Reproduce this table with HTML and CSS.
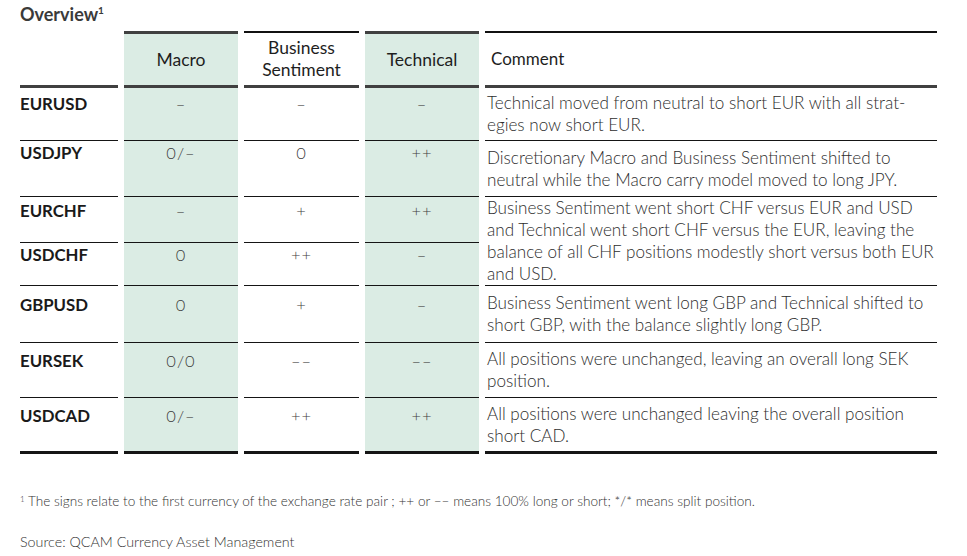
FILE: index.html
```html
<!DOCTYPE html>
<html lang="en">
<head>
<meta charset="utf-8">
<title>Overview</title>
<link rel="stylesheet" href="styles.css">
</head>
<body>
<div class="page">
  <h1 class="title">Overview<sup>1</sup></h1>
  <table class="overview">
    <colgroup>
      <col class="c-pair">
      <col class="c-macro">
      <col class="c-bs">
      <col class="c-tech">
      <col class="c-comment">
    </colgroup>
    <thead>
      <tr class="head">
        <th class="pair"></th>
        <th class="green">Macro</th>
        <th class="white">Business<br>Sentiment</th>
        <th class="green">Technical</th>
        <th class="white comment">Comment</th>
      </tr>
    </thead>
    <tbody>
      <tr class="r1">
        <td class="pair">EURUSD</td>
        <td class="val green">–</td>
        <td class="val">–</td>
        <td class="val green">–</td>
        <td class="comment">Technical moved from neutral to short EUR with all strat-<br>egies now short EUR.</td>
      </tr>
      <tr class="r2">
        <td class="pair">USDJPY</td>
        <td class="val green">0/–</td>
        <td class="val">0</td>
        <td class="val green">++</td>
        <td class="comment">Discretionary Macro and Business Sentiment shifted to neutral while the Macro carry model moved to long JPY.</td>
      </tr>
      <tr class="r3">
        <td class="pair">EURCHF</td>
        <td class="val green">–</td>
        <td class="val">+</td>
        <td class="val green">++</td>
        <td class="comment" rowspan="2">Business Sentiment went short CHF versus EUR and USD and Technical went short CHF versus the EUR, leaving the balance of all CHF positions modestly short versus both EUR and USD.</td>
      </tr>
      <tr class="r4">
        <td class="pair">USDCHF</td>
        <td class="val green">0</td>
        <td class="val">++</td>
        <td class="val green">–</td>
      </tr>
      <tr class="r5">
        <td class="pair">GBPUSD</td>
        <td class="val green">0</td>
        <td class="val">+</td>
        <td class="val green">–</td>
        <td class="comment">Business Sentiment went long GBP and Technical shifted to short GBP, with the balance slightly long GBP.</td>
      </tr>
      <tr class="r6">
        <td class="pair">EURSEK</td>
        <td class="val green">0/0</td>
        <td class="val">––</td>
        <td class="val green">––</td>
        <td class="comment">All positions were unchanged, leaving an overall long SEK position.</td>
      </tr>
      <tr class="r7 last">
        <td class="pair">USDCAD</td>
        <td class="val green">0/–</td>
        <td class="val">++</td>
        <td class="val green">++</td>
        <td class="comment">All positions were unchanged leaving the overall position short CAD.</td>
      </tr>
    </tbody>
  </table>
  <p class="footnote"><sup>1</sup> The signs relate to the first currency of the exchange rate pair ; ++ or –– means 100% long or short; */* means split position.</p>
  <p class="source">Source: QCAM Currency Asset Management</p>
</div>
</body>
</html>
```
FILE: styles.css
```css
html, body {
  margin: 0;
  padding: 0;
  background: #ffffff;
}

body {
  font-family: Lato, "Open Sans", "Liberation Sans", sans-serif;
  color: #333;
}

.page {
  padding: 0 20px;
}

.title {
  margin: 0;
  padding-top: 3px;
  height: 28px;
  font-size: 18px;
  font-weight: 700;
  line-height: 22px;
  color: #3a3a3a;
}

.title sup {
  font-size: 10px;
  vertical-align: 7px;
  line-height: 0;
}

.overview {
  border-collapse: separate;
  border-spacing: 6px 0;
  margin-left: -6px;
  table-layout: fixed;
  width: 929px;
}

.c-pair { width: 98px; }
.c-macro { width: 114px; }
.c-bs { width: 115px; }
.c-tech { width: 114px; }
.c-comment { width: 452px; }

.overview th,
.overview td {
  padding: 0;
  font-size: 17px;
  line-height: 22px;
}

.green {
  background: #dbece4;
}

.head th {
  height: 51px;
  font-size: 17.5px;
  font-weight: 400;
  color: #1e1e1e;
  text-align: center;
  vertical-align: middle;
  border-bottom: 3px solid #404040;
}

.head th.green {
  border-top: 3px solid #404040;
}

.head th.white {
  border-top: 2px solid #111;
  box-shadow: inset 0 1px 0 #fff;
}

.head th.pair {
  border-top: 3px solid transparent;
}

.head th.comment {
  text-align: left;
  padding-left: 6px;
  font-size: 17px;
}

tbody td {
  border-bottom: 1px solid #151515;
  vertical-align: top;
}

tbody tr.last td {
  border-bottom: 3px solid #151515;
}

td.pair {
  font-size: 16.8px;
  font-weight: 700;
  color: #1a1a1a;
}

td.val {
  text-align: center;
  font-size: 16.5px;
  font-weight: 300;
  color: #3d3d3d;
  letter-spacing: 1px;
}

td.comment {
  vertical-align: middle;
  font-size: 17.1px;
  font-weight: 300;
  color: #2e2e2e;
  padding: 0 0 0 2px;
}

.r1 td { height: 52px; }
.r2 td { height: 55px; }
.r3 td { height: 46px; }
.r4 td { height: 44px; }
.r5 td { height: 56px; }
.r6 td { height: 54px; }
.r7 td { height: 53px; }

.r1 td.pair, .r1 td.val { padding-top: 5px; }
.r2 td.pair, .r2 td.val { padding-top: 1px; }
.r3 td.pair, .r3 td.val { padding-top: 3px; }
.r4 td.pair, .r4 td.val { padding-top: 1px; }
.r5 td.pair, .r5 td.val { padding-top: 8px; }
.r6 td.pair, .r6 td.val { padding-top: 7px; }
.r7 td.pair, .r7 td.val { padding-top: 7px; }

td.pair { letter-spacing: 0; }
td.pair, td.val { height: auto; }

.footnote {
  margin: 39px 0 0;
  font-size: 13.6px;
  font-weight: 300;
  color: #333;
  line-height: 16px;
}

.footnote sup {
  font-size: 8px;
  vertical-align: 4px;
  line-height: 0;
}

.source {
  margin: 24px 0 0;
  font-size: 14.3px;
  font-weight: 300;
  color: #333;
  line-height: 18px;
}
```
